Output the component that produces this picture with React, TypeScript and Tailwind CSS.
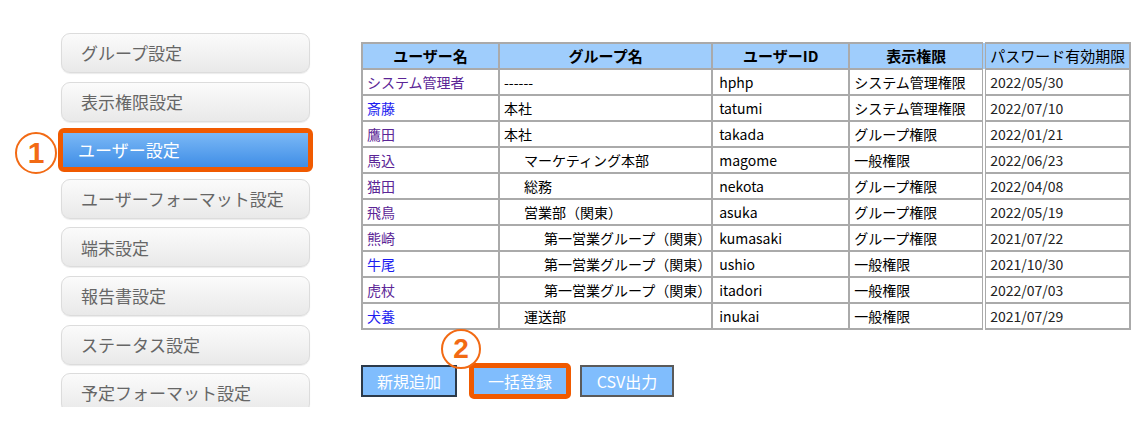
import type { ReactNode } from "react";

type Row = {
    name: string;
    visited: boolean;
    group: string;
    level: number;
    userId: string;
    perm: string;
    expires: string;
};

const rows: Row[] = [
    { name: "システム管理者", visited: true, group: "------", level: 0, userId: "hphp", perm: "システム管理権限", expires: "2022/05/30" },
    { name: "斎藤", visited: false, group: "本社", level: 0, userId: "tatumi", perm: "システム管理権限", expires: "2022/07/10" },
    { name: "鷹田", visited: true, group: "本社", level: 0, userId: "takada", perm: "グループ権限", expires: "2022/01/21" },
    { name: "馬込", visited: true, group: "マーケティング本部", level: 1, userId: "magome", perm: "一般権限", expires: "2022/06/23" },
    { name: "猫田", visited: true, group: "総務", level: 1, userId: "nekota", perm: "グループ権限", expires: "2022/04/08" },
    { name: "飛鳥", visited: true, group: "営業部（関東）", level: 1, userId: "asuka", perm: "グループ権限", expires: "2022/05/19" },
    { name: "熊崎", visited: true, group: "第一営業グループ（関東）", level: 2, userId: "kumasaki", perm: "グループ権限", expires: "2021/07/22" },
    { name: "牛尾", visited: false, group: "第一営業グループ（関東）", level: 2, userId: "ushio", perm: "一般権限", expires: "2021/10/30" },
    { name: "虎杖", visited: true, group: "第一営業グループ（関東）", level: 2, userId: "itadori", perm: "一般権限", expires: "2022/07/03" },
    { name: "犬養", visited: false, group: "運送部", level: 1, userId: "inukai", perm: "一般権限", expires: "2021/07/29" },
];

const menu = [
    "グループ設定",
    "表示権限設定",
    "ユーザー設定",
    "ユーザーフォーマット設定",
    "端末設定",
    "報告書設定",
    "ステータス設定",
    "予定フォーマット設定",
];

const indent = ["pl-[4px]", "pl-[24px]", "pl-[44px]"];

function StepMark({ n, className }: { n: string; className: string }) {
    return (
        <div
            className={`absolute flex items-center justify-center rounded-full border-2 border-[#f26a14] text-[#f26a14] font-bold leading-none ${className}`}
            style={{ fontFamily: '"Liberation Sans", Arial, sans-serif' }}
        >
            {n}
        </div>
    );
}

function MenuButton({ label, active }: { label: string; active?: boolean }) {
    if (active) {
        return (
            <div className="relative -mx-[3px] -my-[2px] rounded-[6px] border-[5px] border-[#f05a00]">
                <StepMark n="1" className="-left-[48px] -top-[1px] h-[42px] w-[42px] text-[30px]" />
                <div className="flex h-[34px] items-center bg-gradient-to-b from-[#7ab8f6] to-[#3f8ee6] pl-[15px] text-[17px] text-white">
                    {label}
                </div>
            </div>
        );
    }

    return (
        <div className="flex h-[40px] shrink-0 items-center rounded-[9px] border border-[#dcdcdc] bg-gradient-to-b from-[#fbfbfb] to-[#e9e9e9] pl-[19px] text-[17px] text-[#666] shadow-[0_1px_1px_rgba(0,0,0,0.08)]">
            {label}
        </div>
    );
}

function Cell({ children, className = "" }: { children: ReactNode; className?: string }) {
    return (
        <td className={`h-[26px] border-2 border-[#aaaaaa] py-0 leading-none whitespace-nowrap ${className}`}>
            {children}
        </td>
    );
}

export default function App() {
    return (
        <div
            className="flex h-[421px] w-[1146px] bg-white"
            style={{ fontFamily: '"Noto Sans CJK JP", "Noto Sans", sans-serif' }}
        >
            <div className="ml-[6px] mt-[31px] h-[376px] w-[307px] shrink-0 overflow-hidden pl-[55px] pt-[2px]">
                <div className="flex w-[249px] flex-col gap-[8.6px]">
                    {menu.map((m) => (
                        <MenuButton key={m} label={m} active={m === "ユーザー設定"} />
                    ))}
                </div>
            </div>

            <div className="ml-[48px] mt-[42px] flex flex-col">
                <table className="border-collapse text-[14px] text-black">
                    <thead>
                        <tr className="bg-[#9fcdfc]">
                            <th className="h-[26px] w-[137px] border-2 border-[#aaaaaa] p-0 text-[15px] font-bold">ユーザー名</th>
                            <th className="w-[212px] border-2 border-[#aaaaaa] p-0 text-[15px] font-bold">グループ名</th>
                            <th className="w-[137px] border-2 border-[#aaaaaa] p-0 text-[15px] font-bold">ユーザーID</th>
                            <th className="w-[135px] border-2 border-[#aaaaaa] p-0 text-[15px] font-bold">表示権限</th>
                            <th className="w-[146px] border-2 border-l-[4px] border-double border-[#aaaaaa] p-0 text-[15px] font-normal">パスワード有効期限</th>
                        </tr>
                    </thead>
                    <tbody>
                        {rows.map((r) => (
                            <tr key={r.userId}>
                                <Cell className={`pl-[4px] ${r.visited ? "text-[#5b2596]" : "text-[#1c1cf0]"}`}>
                                    {r.name}
                                </Cell>
                                <Cell className={indent[r.level]}>{r.group}</Cell>
                                <Cell className="pl-[6px]">{r.userId}</Cell>
                                <Cell className="pl-[4px]">{r.perm}</Cell>
                                <Cell className="border-l-[4px] border-double pl-[4px] text-[#222]">{r.expires}</Cell>
                            </tr>
                        ))}
                    </tbody>
                </table>

                <div className="mt-[33px] flex items-center">
                    <button className="h-[32px] w-[96px] border-2 border-[#2c3a4a] bg-[#80bdfd] text-[16px] text-white">
                        新規追加
                    </button>
                    <div className="relative ml-[12px] rounded-[5px] border-[5px] border-[#f05a00]">
                        <StepMark n="2" className="-left-[33px] -top-[39px] h-[40px] w-[40px] text-[28px]" />
                        <div className="flex h-[26px] w-[92px] items-center justify-center bg-[#80bdfd] text-[16px] text-white">
                            一括登録
                        </div>
                    </div>
                    <button className="ml-[9px] h-[32px] w-[94px] border-2 border-[#5a5a5a] bg-[#80bdfd] text-[16px] text-white">
                        CSV出力
                    </button>
                </div>
            </div>
        </div>
    );
}
